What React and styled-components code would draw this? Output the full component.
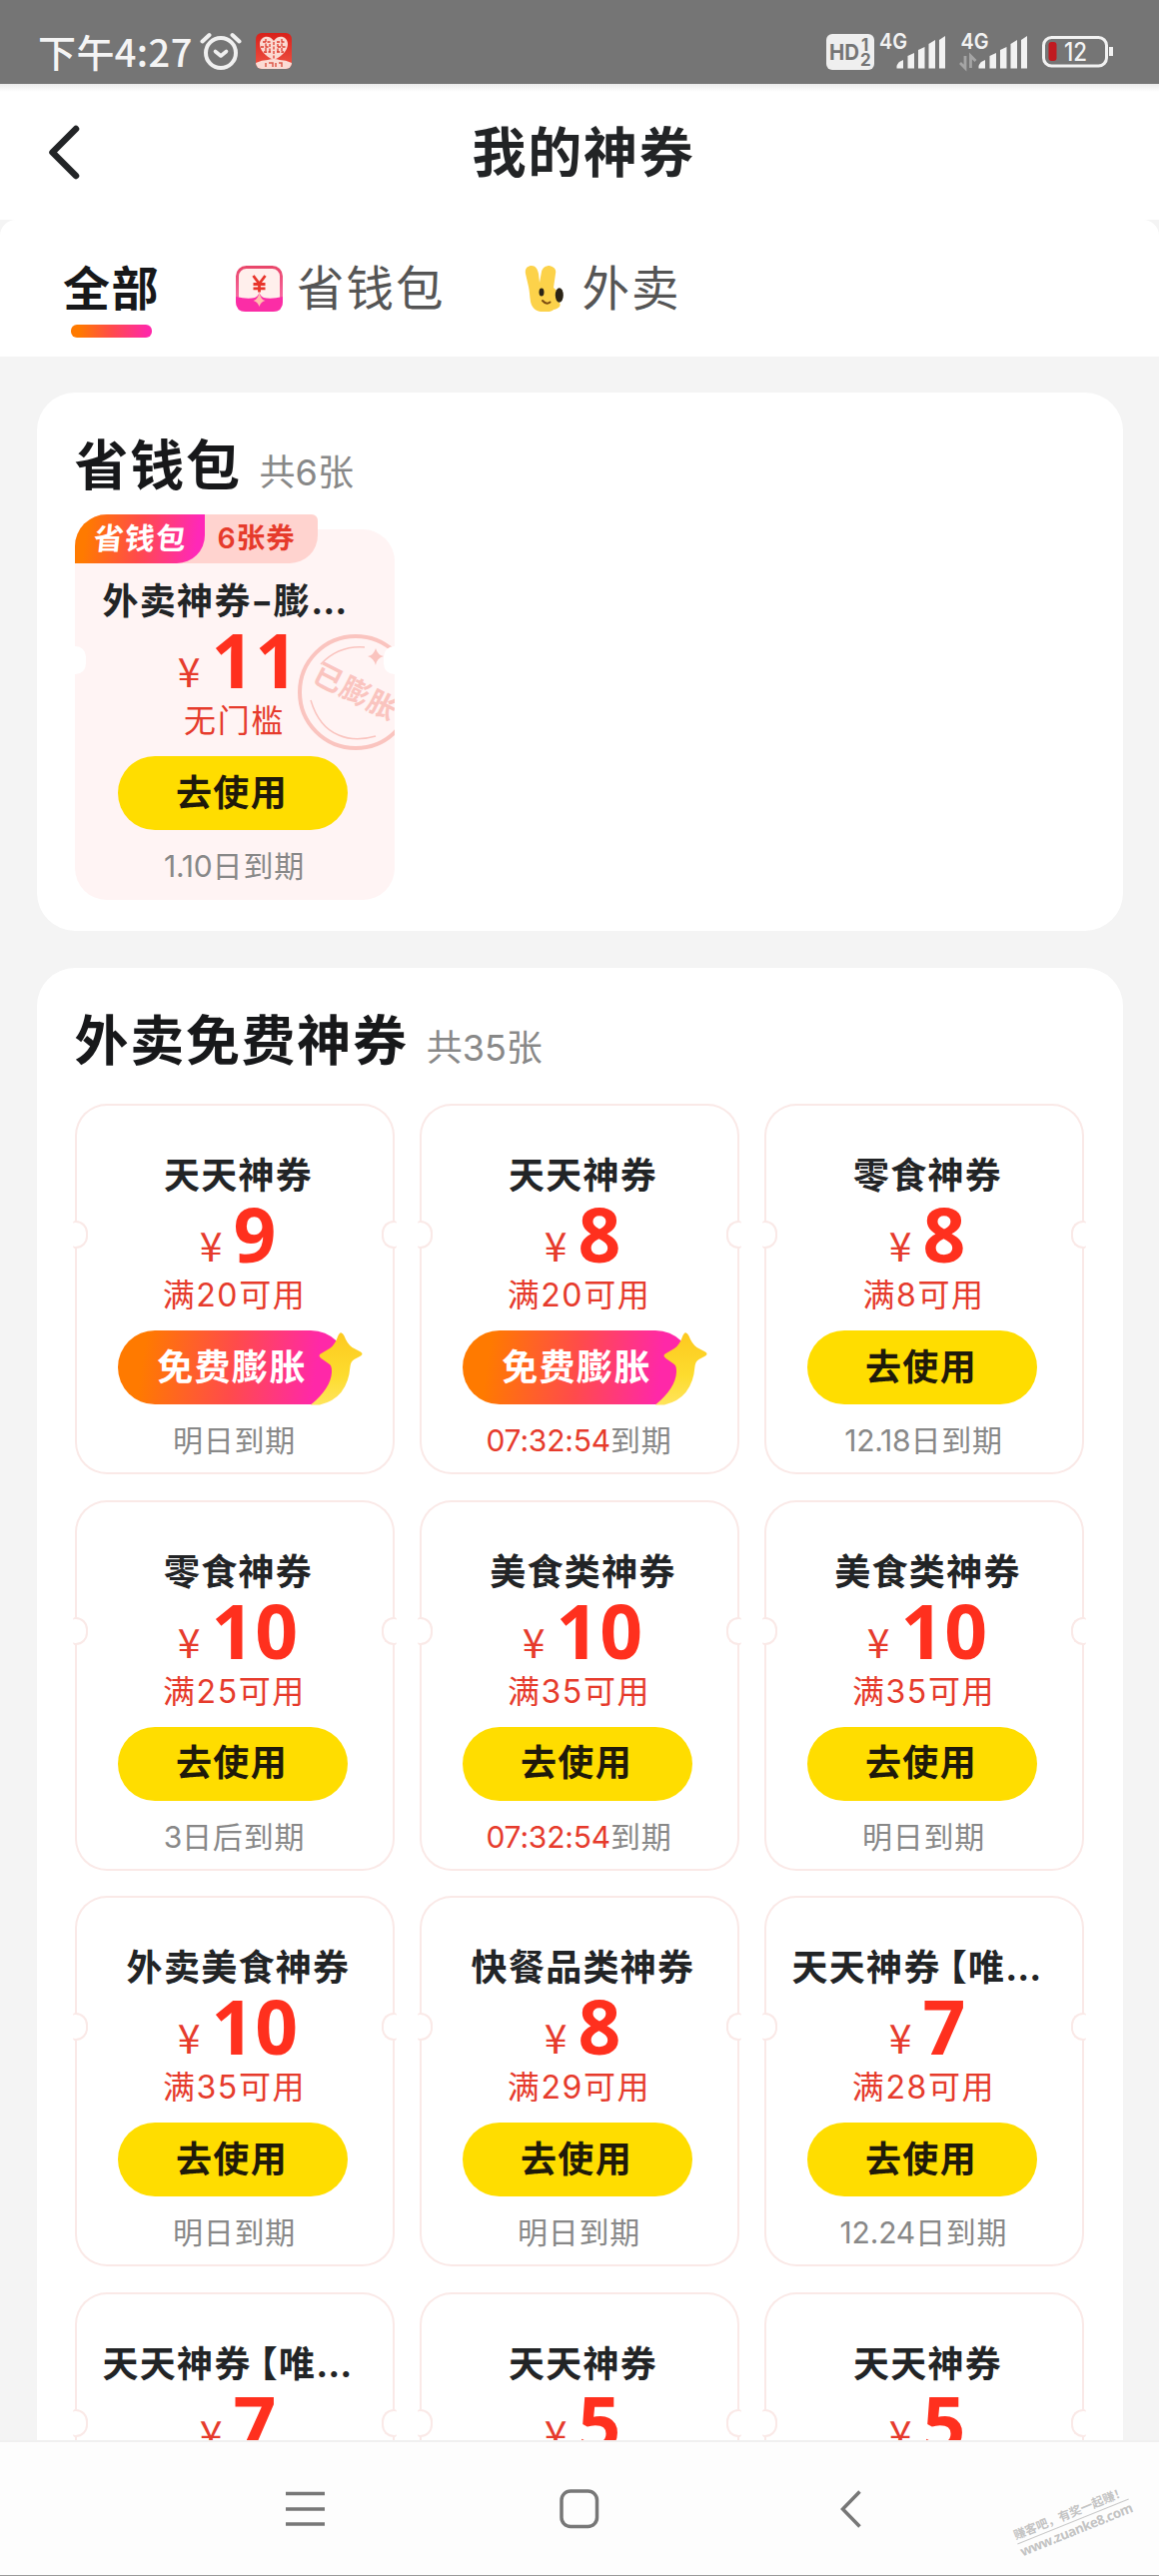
import styled, { createGlobalStyle, css } from "styled-components"

const GlobalStyle = createGlobalStyle`
    * {
        box-sizing: border-box;
    }
    body {
        margin: 0;
        background-color: #fff;
        font-family: "Inter", "Noto Sans CJK SC", sans-serif;
    }
`
const Page = styled.div`
    display: flex;
    flex-direction: column;
    width: 1160px;
    height: 2579px;
    overflow: hidden;
    background-color: #f4f4f4;
`
const StatusBar = styled.div`
    display: flex;
    flex: none;
    justify-content: space-between;
    height: 84px;
    padding: 32px 44px 0 38px;
    background-color: #757575;
    color: #f4f4f4;
`
const StatusGroup = styled.div`
    display: flex;
    align-items: flex-start;
`
const Time = styled.div`
    width: 162px;
    font-family: "Noto Sans CJK SC", sans-serif;
    font-size: 38px;
    font-weight: 500;
    line-height: 38px;
    letter-spacing: 0.4px;
    white-space: nowrap;
`
const NavBar = styled.div`
    display: grid;
    grid-template-columns: 120px 1fr 120px;
    align-items: center;
    flex: none;
    height: 136px;
    padding: 0 40px 0 48px;
    background: linear-gradient(#ebebeb, #fff 8px);
`
const PageTitle = styled.h1`
    margin: 0;
    padding-top: 4px;
    color: #222426;
    font-size: 54px;
    line-height: 64px;
    letter-spacing: 1.7px;
    text-align: center;
`
const Tabs = styled.div`
    display: flex;
    align-items: flex-start;
    flex: none;
    height: 137px;
    padding: 40px 64px 0;
    border-radius: 16px 16px 0 0;
    background-color: #fff;
`
const Tab = styled.div`
    display: flex;
    flex-direction: column;
    align-items: center;
    width: 95px;
    margin-right: 77px;
    color: #17181a;
    font-size: 47px;
    font-weight: 700;
    line-height: 58px;
    letter-spacing: 1.5px;
    white-space: nowrap;
`
const TabLine = styled.div`
    width: 81px;
    height: 13px;
    margin-top: 7px;
    border-radius: 6px;
    background: linear-gradient(90deg, #ff7a00 10%, #ff4b4b 50%, #ff28a8 95%);
`
const IconTab = styled.div`
    display: flex;
    align-items: flex-start;
    gap: ${props => props.$gap}px;
    margin-right: 79px;
    color: #555;
    font-size: 47.5px;
    line-height: 58px;
    letter-spacing: 2px;
    svg {
        flex: none;
        margin-top: 6px;
    }
`
const Main = styled.main`
    display: flex;
    flex-direction: column;
    flex: 1;
    gap: 37px;
    min-height: 0;
    padding: 36px 36px 0 37px;
    overflow: hidden;
`
const Section = styled.section`
    flex: none;
    padding: 0 39px 31px 37.5px;
    border-radius: 38px;
    background-color: #fff;
`
const SectionHead = styled.div`
    display: flex;
    align-items: baseline;
    gap: 18px;
    height: ${props => props.$height}px;
    padding-top: 41px;
`
const SectionTitle = styled.h2`
    margin: 0;
    color: #17181a;
    font-size: 54px;
    line-height: 66px;
    letter-spacing: 1.7px;
`
const SectionCount = styled.span`
    color: #888;
    font-size: 36px;
    line-height: 40px;
`
const Grid = styled.div`
    display: grid;
    grid-template-columns: repeat(3, 320px);
    gap: 25.5px 25px;
`
const Ticket = styled.div`
    position: relative;
    display: flex;
    flex-direction: column;
    align-items: center;
    height: 371px;
    padding-top: 50px;
    border-radius: 32px;
    ${props => props.$filled ? css`
        background-color: #fff4f4;
    ` : css`
        box-shadow: inset 0 0 0 2px #fae9e7;
        background-color: #fff;
    `}
`
const Notch = styled.span`
    position: absolute;
    top: 117px;
    ${props => props.$side}: -2px;
    width: ${props => props.$filled ? 13 : 15}px;
    height: 28px;
    border: 2px solid ${props => props.$filled ? "#fff" : "#fae9e7"};
    border-${props => props.$side}: none;
    border-radius: ${props => props.$side === "left" ? "3px 13px 13px 3px" : "13px 3px 3px 13px"};
    background-color: #fff;
`
const Name = styled.div`
    align-self: stretch;
    padding-left: ${props => props.$long ? 28 : 8}px;
    color: #222426;
    font-size: 36px;
    font-weight: 700;
    line-height: 44px;
    letter-spacing: 1.3px;
    text-align: ${props => props.$long ? "left" : "center"};
    white-space: nowrap;
`
const Bracket = styled.span`
    margin-left: -10px;
`
const Dash = styled.span`
    display: inline-block;
    margin: 0 2px;
    transform: scaleX(1.3);
`
const Dots = styled.span`
    letter-spacing: 0;
`
const Amount = styled.div`
    display: flex;
    align-items: baseline;
    height: 64px;
    margin-top: 4px;
    padding-left: 8px;
    color: #ff301e;
    font-family: "Open Sans", sans-serif;
    font-size: 75px;
    font-weight: 660;
    line-height: 64px;
    letter-spacing: 1px;
`
const Yen = styled.span`
    position: relative;
    top: -1px;
    margin-right: 11px;
    color: #e63b2c;
    font-family: "Noto Sans CJK SC", sans-serif;
    font-size: 41px;
    font-weight: 400;
    letter-spacing: 0;
`
const Condition = styled.div`
    margin-top: 9px;
    color: #e63b2c;
    font-size: 32px;
    line-height: 41px;
    letter-spacing: 1.6px;
    white-space: nowrap;
`
const Button = styled.button`
    position: relative;
    width: 230px;
    height: 74px;
    margin: 15px 4px 0 0;
    padding: 0 1px 1px 0;
    border: none;
    border-radius: 37px;
    background: ${props => props.$boost ? "linear-gradient(98deg, #ff7a00 12%, #ff4b4b 50%, #ff28a8 85%)" : "#ffdd00"};
    color: ${props => props.$boost ? "#fff" : "#1f1a0a"};
    font-family: inherit;
    font-size: 36px;
    font-weight: 700;
    line-height: 44px;
    letter-spacing: 1.4px;
`
const Star = styled.svg`
    position: absolute;
    left: 190px;
    top: 0;
`
const Expire = styled.div`
    margin-top: 16px;
    color: #888;
    font-size: 30px;
    line-height: 40px;
    letter-spacing: 0.8px;
    white-space: nowrap;
`
const Figures = styled.span`
    color: ${props => props.$red ? "#e63b2c" : "inherit"};
    letter-spacing: -0.2px;
`
const StampLayer = styled.div`
    position: absolute;
    inset: 0;
    border-radius: 32px;
    overflow: hidden;
    svg {
        position: absolute;
        left: 222px;
        top: 104px;
    }
`
const Tag = styled.div`
    position: absolute;
    left: 0;
    top: -15px;
    display: flex;
    height: 49px;
    border-radius: 32px 6px 28px 0;
    background-color: #ffd3cf;
    font-size: 30px;
    font-weight: 700;
    line-height: 48px;
    letter-spacing: 1px;
`
const TagName = styled.div`
    width: 130px;
    padding-left: 19px;
    border-radius: 32px 0 28px 0;
    background: linear-gradient(98deg, #ff7a00 10%, #ff4b4b 50%, #ff28b8 92%);
    color: #fff;
    span {
        display: inline-block;
        transform: skewX(-6deg);
    }
`
const TagCount = styled.div`
    width: 113px;
    padding-left: 13px;
    color: #e63b2c;
    font-size: 28.5px;
    font-weight: 600;
    letter-spacing: 1px;
`
const SystemNav = styled.div`
    position: relative;
    display: flex;
    flex: none;
    height: 136px;
    padding: 47px 0 0 286px;
    border-top: 2px solid #f0f0f0;
    border-bottom: 1px solid #9a9a9a;
    background-color: #fdfdfd;
    svg {
        flex: none;
    }
`
const NavSlot = styled.div`
    width: ${props => props.$width}px;
`
const Watermark = styled.div`
    position: absolute;
    left: 1014px;
    top: 62px;
    width: 120px;
    transform: rotate(-22deg);
    color: #c4c4c4;
    font-size: 12px;
    font-weight: 700;
    line-height: 17px;
    white-space: nowrap;
`
const WatermarkUrl = styled.div`
    border-top: 1px solid #c9c9c9;
    font-family: "Open Sans", sans-serif;
    font-size: 13.5px;
    line-height: 17px;
    letter-spacing: -0.5px;
`

const AlarmIcon = () => (
    <svg width="42" height="40" viewBox="0 0 42 40" fill="none" stroke="#f0f0f0" strokeLinecap="round">
        <circle cx="21" cy="21" r="15" strokeWidth="4" />
        <path d="M15.500 19.500l5.500 4.500 5.500-4.500" strokeWidth="3.600" strokeLinejoin="round" />
        <path d="M2.500 9.500l7-6.500M39.500 9.500l-7-6.500" strokeWidth="4" />
    </svg>
)

const HeartAppIcon = () => (
    <svg width="36" height="38" viewBox="0 0 36 38">
        <defs>
            <linearGradient id="heartBg" x1="0" y1="0" x2="0" y2="1">
                <stop offset="0" stopColor="#d9201a" />
                <stop offset="1" stopColor="#f05545" />
            </linearGradient>
            <clipPath id="heartClip"><rect y="1" width="36" height="36" rx="6" /></clipPath>
        </defs>
        <g clipPath="url(#heartClip)">
            <rect y="1" width="36" height="36" fill="url(#heartBg)" />
            <path d="M18 28C9 24 4 18 4 12c0-8 10-10 14-3 4-7 14-5 14 3 0 6-5 12-14 16z" fill="#fbd9d2" />
            <path d="M7 10h8M21 10h8M5 15h9M22 15h9M8 20h7M21 20h7M10 7v14M26 7v14M18 10v18M14 12v9M22 12v9" stroke="#dd3a2d" strokeWidth="1.3" strokeDasharray="3 1.5" />
            <path d="M0 31q6-3 12-3 6-2 12 0 6 0 12 3v7H0z" fill="#fbdcd5" />
            <path d="M10 31v4M13 31h4v4M20 31v4M23 31h3v4" stroke="#dd5a4a" strokeWidth="1.5" fill="none" />
        </g>
    </svg>
)

const Bars = ({ x }) => (
    <g transform={`translate(${x} 0)`} fill="#f2f2f2">
        <path d="M0 36.500V34q1-4 6.500-6v8.500z" />
        <path d="M11 36.500V24l6.500-3v15.500z" />
        <path d="M21.500 36.500V18l6.500-3v21.500z" />
        <path d="M32 36.500V12l6.500-4v28.500z" />
        <path d="M42.500 36.500V8l6-4v32.500z" />
    </g>
)

const SignalSvg = styled.svg`
    margin-top: -8px;
`
const SignalIcons = () => (
    <SignalSvg width="290" height="48" viewBox="0 -8 290 48" fontFamily="Inter, sans-serif">
        <rect x="1" y="2" width="48" height="36" rx="6" fill="#efefef" />
        <text x="4" y="27.500" fontSize="22" fontWeight="700" fill="#757575" textLength="30" lengthAdjust="spacingAndGlyphs">HD</text>
        <text x="36" y="19" fontSize="17" fontWeight="700" fill="#757575">1</text>
        <text x="35" y="34" fontSize="17" fontWeight="700" fill="#757575">2</text>
        <text x="54" y="17" fontSize="22" fontWeight="600" fill="#f2f2f2" textLength="28" lengthAdjust="spacingAndGlyphs">4G</text>
        <Bars x={71.500} />
        <text x="135.500" y="17" fontSize="22" fontWeight="600" fill="#f2f2f2" textLength="28" lengthAdjust="spacingAndGlyphs">4G</text>
        <Bars x={153.500} />
        <path d="M140 24v12l-5-5M145.500 36V24l5 5" fill="none" stroke="#a5a5a5" strokeWidth="2.800" />
        <rect x="218.500" y="5.500" width="63" height="28.500" rx="8" fill="none" stroke="#f2f2f2" strokeWidth="3" />
        <path d="M286 15v9" stroke="#f2f2f2" strokeWidth="4" />
        <rect x="223.500" y="10" width="8" height="19" rx="3" fill="#c01a20" />
        <text x="239" y="28.500" fontSize="25" fontWeight="500" fill="#f2f2f2" textLength="23" lengthAdjust="spacingAndGlyphs">12</text>
    </SignalSvg>
)

const WalletIcon = () => (
    <svg width="47" height="46" viewBox="0 0 47 46">
        <defs>
            <linearGradient id="wallet" x1="0" y1="0" x2="0" y2="1">
                <stop offset="0" stopColor="#e9476b" />
                <stop offset="1" stopColor="#ff74b8" />
            </linearGradient>
        </defs>
        <rect x="1.500" y="1.500" width="44" height="43" rx="9" fill="#ffefec" stroke="url(#wallet)" strokeWidth="3" />
        <path d="M0 31q12 3 19 1 3-1 4.500-5 1.500 4 4.500 5 7 2 19-1v5q0 10-10 10H10Q0 46 0 36z" fill="#fb2da6" />
        <path d="M23.500 27q1.500 7 6 8-4.500 1-6 6-1.500-5-6-6 4.500-1 6-8z" fill="#ffbfae" />
        <path d="M17.500 10l6 8 6-8M23.500 18v8.500M17.500 18.500h12M17.500 22.800h12" fill="none" stroke="#e8352b" strokeWidth="2.800" />
    </svg>
)

const BunnyIcon = () => (
    <svg width="40" height="46" viewBox="0 0 40 46">
        <path d="M1 8C0 3 3 0 7 0s6 3 7 8l1 9 2-11c1-4 4-6 8-6 5 1 7 4 6 8l-2 14c4 3 5 7 4 12l2 3c2 3-1 6-6 7-2 2-8 3-13 2-6-1-9-5-10-10-1-6-1-11-2-15z" fill="#fcd24a" />
        <ellipse cx="34.800" cy="29.500" rx="4" ry="7.300" fill="#2b2416" />
        <ellipse cx="17" cy="26.500" rx="2.500" ry="4" fill="#2b2416" />
        <path d="M18 35q4 4.500 7.500 1.500" fill="none" stroke="#7a4a10" strokeWidth="2" strokeLinecap="round" />
    </svg>
)

const Stamp = () => (
    <svg width="118" height="118" viewBox="0 0 118 118" fill="none" stroke="#fac4bf">
        <circle cx="59" cy="59" r="56" strokeWidth="4" />
        <path d="M24 31Q42 12 68 14M14 67Q22 94 42 102 58 109 79 103" strokeWidth="1.500" />
        <path d="M79 15q2 7 8 8-7 2-8 9-2-7-8-9 6-1 8-8z" fill="#fac4bf" stroke="none" />
        <text x="59" y="69" transform="rotate(27 59 59)" textAnchor="middle" fontSize="29" fontWeight="700" letterSpacing="1" fill="#fac4bf" stroke="none">已膨胀</text>
    </svg>
)

const BoostStar = () => (
    <Star width="56" height="76" viewBox="0 0 56 76">
        <defs>
            <linearGradient id="star" x1="0" y1="0" x2="0" y2="1">
                <stop offset="0" stopColor="#fdc91f" />
                <stop offset="0.6" stopColor="#fddc2e" />
                <stop offset="1" stopColor="#ffe45c" />
            </linearGradient>
        </defs>
        <path d="M33.500 2.500q1.500 0 3 3 3 8 8 11.500l8.500 4.500q3 2 0 4l-6.500 3.500q-3.500 2-4 7Q40 68 12 74.500H3Q23 58 24 42q.3-6-2-8l-8.500-6q-4-3 0-5l8.500-5q5-3 8.500-13 1.500-3 3-3z" fill="url(#star)" />
    </Star>
)

const sections = [
    {
        title: "省钱包", count: "共6张", head: 137, tickets: [
            { name: "外卖神券", dash: true, rest: "膨", long: true, amount: 11, condition: "无门槛", expire: "1.10日到期", filled: true },
        ]
    },
    {
        title: "外卖免费神券", count: "共35张", head: 136, tickets: [
            { name: "天天神券", amount: 9, condition: "满20可用", expire: "明日到期", boost: true },
            { name: "天天神券", amount: 8, condition: "满20可用", expire: "07:32:54到期", boost: true },
            { name: "零食神券", amount: 8, condition: "满8可用", expire: "12.18日到期" },
            { name: "零食神券", amount: 10, condition: "满25可用", expire: "3日后到期" },
            { name: "美食类神券", amount: 10, condition: "满35可用", expire: "07:32:54到期" },
            { name: "美食类神券", amount: 10, condition: "满35可用", expire: "明日到期" },
            { name: "外卖美食神券", amount: 10, condition: "满35可用", expire: "明日到期" },
            { name: "快餐品类神券", amount: 8, condition: "满29可用", expire: "明日到期" },
            { name: "天天神券", rest: "【唯", long: true, amount: 7, condition: "满28可用", expire: "12.24日到期" },
            { name: "天天神券", rest: "【唯", long: true, amount: 7 },
            { name: "天天神券", amount: 5 },
            { name: "天天神券", amount: 5 },
        ]
    },
]

const TicketName = ({ ticket }) => {
    const { name, dash, rest, long } = ticket

    return (
        <Name $long={long}>
            {name}
            {dash && <Dash>-</Dash>}
            {rest && (dash ? rest : <Bracket>{rest}</Bracket>)}
            {long && <Dots>...</Dots>}
        </Name>
    )
}

const ExpireLine = ({ text }) => {
    const [, figures, label] = text.match(/^([\d.:]*)(.*)$/)

    return (
        <Expire>
            {figures && <Figures $red={figures.includes(":")}>{figures}</Figures>}
            {label}
        </Expire>
    )
}

const Card = ({ ticket }) => {
    const { amount, condition, expire, boost, filled } = ticket

    return (
        <Ticket $filled={filled}>
            {filled && <StampLayer><Stamp /></StampLayer>}
            {filled && (
                <Tag>
                    <TagName><span>省钱包</span></TagName>
                    <TagCount>6张券</TagCount>
                </Tag>
            )}
            <Notch $side="left" $filled={filled} />
            <Notch $side="right" $filled={filled} />
            <TicketName ticket={ticket} />
            <Amount><Yen>¥</Yen>{amount}</Amount>
            {condition && <Condition>{condition}</Condition>}
            {condition && (
                <Button $boost={boost}>
                    {boost ? "免费膨胀" : "去使用"}
                    {boost && <BoostStar />}
                </Button>
            )}
            {expire && <ExpireLine text={expire} />}
        </Ticket>
    )
}

const App = () => {
    return (
        <>
            <GlobalStyle />
            <Page>
                <StatusBar>
                    <StatusGroup>
                        <Time>下午4:27</Time>
                        <AlarmIcon />
                        <NavSlot $width={14} />
                        <HeartAppIcon />
                    </StatusGroup>
                    <SignalIcons />
                </StatusBar>
                <NavBar>
                    <svg width="34" height="56" viewBox="0 0 34 56" fill="none" stroke="#222426" strokeWidth="6.5" strokeLinecap="round" strokeLinejoin="round">
                        <path d="M28 5L4.500 28.500 28 52" />
                    </svg>
                    <PageTitle>我的神券</PageTitle>
                </NavBar>
                <Tabs>
                    <Tab>全部<TabLine /></Tab>
                    <IconTab $gap={14}><WalletIcon />省钱包</IconTab>
                    <IconTab $gap={18}><BunnyIcon />外卖</IconTab>
                </Tabs>
                <Main>
                    {sections.map(section => (
                        <Section key={section.title}>
                            <SectionHead $height={section.head}>
                                <SectionTitle>{section.title}</SectionTitle>
                                <SectionCount>{section.count}</SectionCount>
                            </SectionHead>
                            <Grid>
                                {section.tickets.map((ticket, i) => <Card key={i} ticket={ticket} />)}
                            </Grid>
                        </Section>
                    ))}
                </Main>
                <SystemNav>
                    <NavSlot $width={274}>
                        <svg width="39" height="42" viewBox="0 0 39 42" stroke="#777" strokeWidth="3.5">
                            <path d="M0 4.500h39M0 20h39M0 35h39" />
                        </svg>
                    </NavSlot>
                    <NavSlot $width={280}>
                        <svg width="40" height="42" viewBox="0 0 40 42" fill="none" stroke="#777" strokeWidth="3.5">
                            <rect x="2" y="2" width="35.500" height="35.500" rx="9" />
                        </svg>
                    </NavSlot>
                    <svg width="24" height="42" viewBox="0 0 24 42" fill="none" stroke="#777" strokeWidth="3.5">
                        <path d="M20.500 2.500L3.500 20l17 17.500" />
                    </svg>
                    <Watermark>
                        赚客吧，有奖一起赚！
                        <WatermarkUrl>www.zuanke8.com</WatermarkUrl>
                    </Watermark>
                </SystemNav>
            </Page>
        </>
    )
}

export default App
